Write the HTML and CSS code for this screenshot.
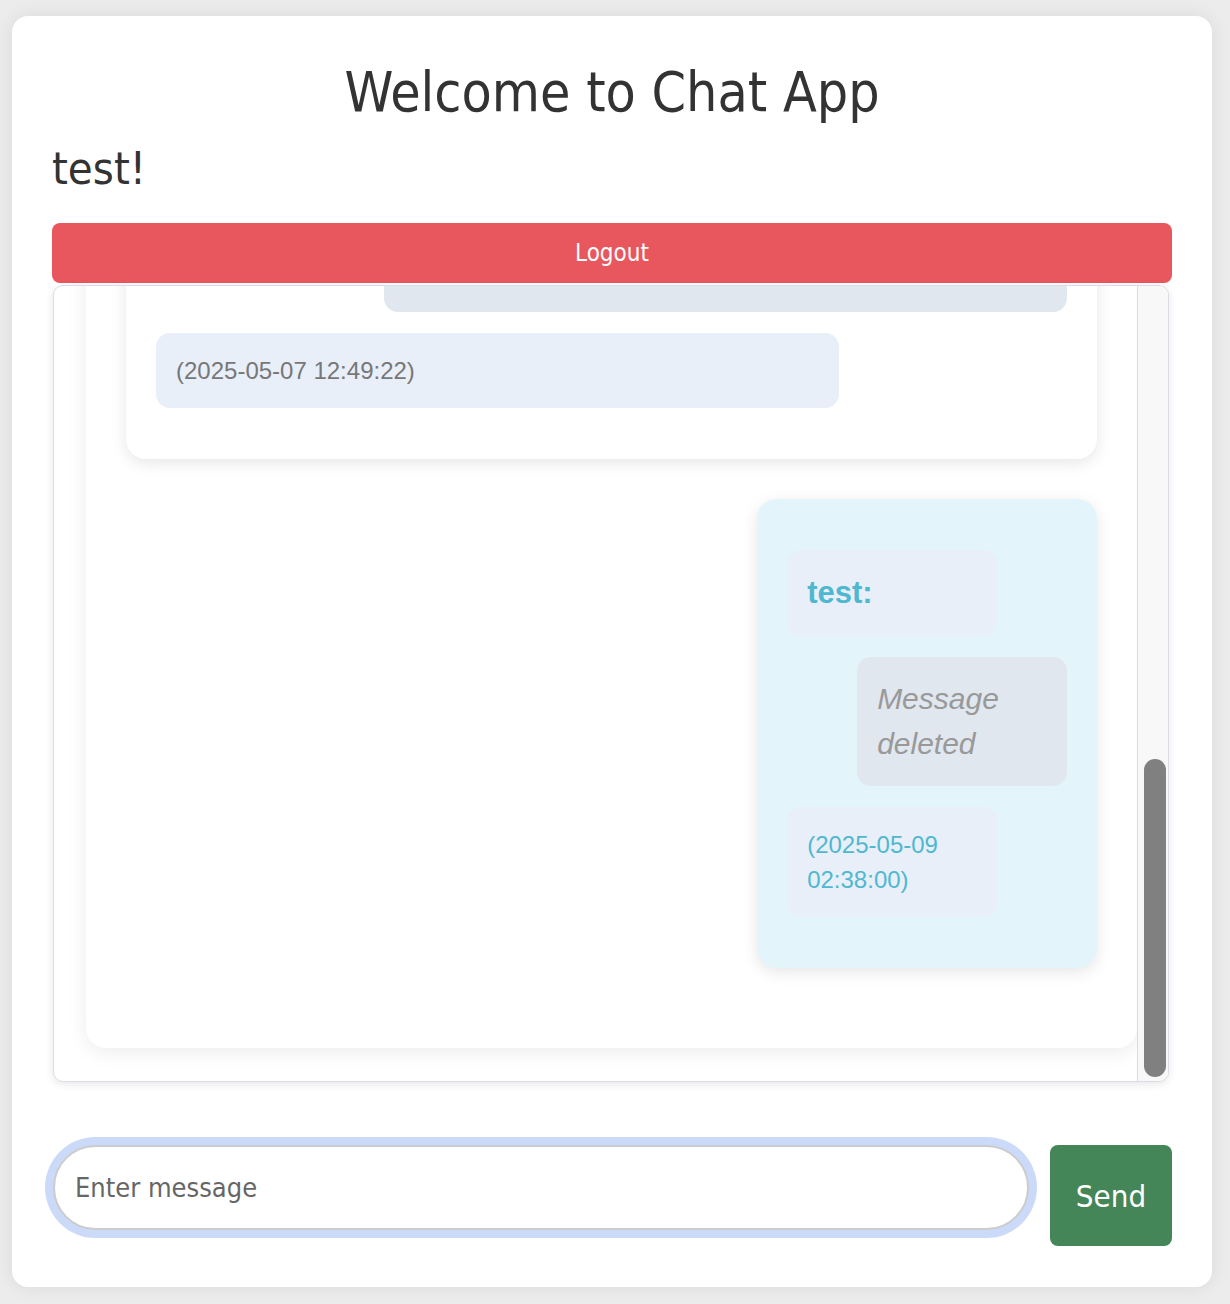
FILE: index.html
```html
<!DOCTYPE html>
<html lang="en">
<head>
<meta charset="utf-8">
<title>Chat App</title>
<link rel="stylesheet" href="styles.css">
</head>
<body>
<div class="app">
  <h1 class="title">Welcome to Chat App</h1>
  <h2 class="greeting">test!</h2>
  <button class="logout" type="button">Logout</button>
  <div class="chat-box">
    <div class="chat-viewport">
      <div class="chat-inner">
        <div class="msg other">
          <div class="bubble content">Hello friends, good morning!</div>
          <div class="bubble time">(2025-05-07 12:49:22)</div>
        </div>
        <div class="msg own">
          <div class="bubble sender">test:</div>
          <div class="bubble content deleted">Message deleted</div>
          <div class="bubble time">(2025-05-09 02:38:00)</div>
        </div>
      </div>
    </div>
    <div class="scroll-track">
      <div class="scroll-thumb"></div>
    </div>
  </div>
  <form class="composer" onsubmit="return false;">
    <input class="composer-input" type="text" placeholder="Enter message">
    <button class="send" type="submit">Send</button>
  </form>
</div>
</body>
</html>
```

FILE: styles.css
```css
html, body {
  margin: 0;
  padding: 0;
}

body {
  background: #ececec;
  font-family: "DejaVu Sans Condensed", "DejaVu Sans", sans-serif;
  font-stretch: condensed;
  color: #333333;
  padding: 16px 18px 16px 12px;
}

.app {
  background: #ffffff;
  border-radius: 16px;
  box-shadow: 0 0 20px rgba(0, 0, 0, 0.08);
  padding: 40px 40px 41px;
}

.title {
  margin: 0;
  font-size: 55px;
  line-height: 72px;
  font-weight: normal;
  text-align: center;
  color: #333333;
}

.greeting {
  margin: 12px 0 25px;
  font-size: 45px;
  line-height: 58px;
  font-weight: normal;
  color: #333333;
}

.logout {
  display: block;
  width: 100%;
  height: 60px;
  border: none;
  border-radius: 8px;
  background: #e9575e;
  color: #ffffff;
  font-family: inherit;
  font-stretch: condensed;
  font-size: 24px;
}

.chat-box {
  margin: 2px 3px 0 1px;
  height: 797px;
  box-sizing: border-box;
  border: 1px solid #dadee4;
  border-radius: 10px;
  background: #ffffff;
  box-shadow: 0 2px 8px rgba(0, 0, 0, 0.1);
  overflow: hidden;
  display: flex;
}

.chat-viewport {
  flex: 1;
  min-width: 0;
  overflow: hidden;
  display: flex;
  flex-direction: column-reverse;
}

.scroll-track {
  flex: none;
  width: 31px;
  box-sizing: border-box;
  background: #f8f8f8;
  border-left: 1px solid #dcdcdc;
  padding: 4px 2px 4px 6px;
  display: flex;
  flex-direction: column;
  justify-content: flex-end;
}

.scroll-thumb {
  height: 318px;
  background: #808080;
  border-radius: 11px;
}

.chat-inner {
  flex: none;
  margin: 32px 0 33px 32px;
  padding: 40px;
  background: #ffffff;
  border-radius: 20px;
  box-shadow: 0 4px 20px rgba(0, 0, 0, 0.08);
}

.msg {
  padding: 30px;
  margin-bottom: 40px;
  border-radius: 20px;
  box-shadow: 0 4px 16px rgba(0, 0, 0, 0.1);
  font-family: "Liberation Sans", Arial, sans-serif;
  font-stretch: normal;
}

.msg.other {
  background: #ffffff;
}

.msg.own {
  background: #e3f5fa;
  width: 35%;
  margin-left: auto;
  box-sizing: border-box;
}

.bubble {
  width: 75%;
  box-sizing: border-box;
  padding: 20px;
  margin: 21px 0;
  border-radius: 14px;
}

.other .time {
  margin-top: 20px;
}

.sender {
  background: #e8eff9;
  font-size: 31px;
  line-height: 46px;
  font-weight: bold;
  color: #555555;
}

.own .sender {
  color: #4fb8d0;
}

.content {
  margin-left: auto;
  background: #e0e7ef;
  font-size: 30px;
  line-height: 44.5px;
  color: #333333;
}

.content.deleted {
  font-style: italic;
  color: #999999;
}

.time {
  background: #e8eff9;
  font-size: 24px;
  line-height: 35px;
  color: #777777;
}

.own .time {
  color: #4fb8d0;
}

.composer {
  margin: 63px 0 0;
  display: flex;
  align-items: flex-start;
  gap: 21px;
}

.composer-input {
  flex: 1;
  min-width: 0;
  height: 85px;
  box-sizing: border-box;
  margin: 0 0 0 1px;
  border: 2px solid #cccccc;
  border-radius: 43px;
  padding: 0 20px;
  font-family: inherit;
  font-stretch: condensed;
  font-size: 27px;
  color: #333333;
  background: #ffffff;
  box-shadow: 0 0 0 8px #cbdaf8;
  outline: none;
}

.composer-input::placeholder {
  color: #666666;
}

.send {
  flex: none;
  width: 122px;
  height: 101px;
  border: none;
  border-radius: 8px;
  background: #448658;
  color: #ffffff;
  font-family: inherit;
  font-stretch: condensed;
  font-size: 31px;
}
```
